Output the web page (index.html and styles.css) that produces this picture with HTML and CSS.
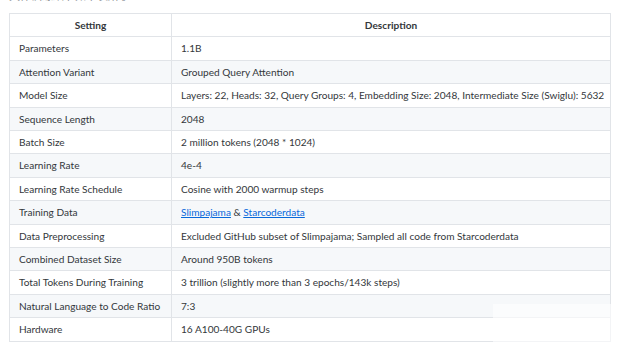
FILE: index.html
```html
<!DOCTYPE html>
<html lang="zh-CN">
<head>
    <meta charset="UTF-8">
    <title>TinyLlama Settings</title>
    <link rel="stylesheet" href="styles.css">
</head>
<body>
    <p class="intro">具体训练细节如下表所示：</p>

    <table class="settings">
        <colgroup>
            <col class="col-setting">
            <col>
        </colgroup>
        <thead>
            <tr>
                <th>Setting</th>
                <th>Description</th>
            </tr>
        </thead>
        <tbody>
            <tr><td>Parameters</td><td>1.1B</td></tr>
            <tr><td>Attention Variant</td><td>Grouped Query Attention</td></tr>
            <tr><td>Model Size</td><td>Layers: 22, Heads: 32, Query Groups: 4, Embedding Size: 2048, Intermediate Size (Swiglu): 5632</td></tr>
            <tr><td>Sequence Length</td><td>2048</td></tr>
            <tr><td>Batch Size</td><td>2 million tokens (2048 * 1024)</td></tr>
            <tr><td>Learning Rate</td><td>4e-4</td></tr>
            <tr><td>Learning Rate Schedule</td><td>Cosine with 2000 warmup steps</td></tr>
            <tr><td>Training Data</td><td><a href="#">Slimpajama</a> &amp; <a href="#">Starcoderdata</a></td></tr>
            <tr><td>Data Preprocessing</td><td>Excluded GitHub subset of Slimpajama; Sampled all code from Starcoderdata</td></tr>
            <tr><td>Combined Dataset Size</td><td>Around 950B tokens</td></tr>
            <tr><td>Total Tokens During Training</td><td>3 trillion (slightly more than 3 epochs/143k steps)</td></tr>
            <tr><td>Natural Language to Code Ratio</td><td>7:3</td></tr>
            <tr><td>Hardware</td><td>16 A100-40G GPUs</td></tr>
        </tbody>
    </table>

    <div class="watermark"></div>
</body>
</html>
```

FILE: styles.css
```css
:root {
    --text: #33373b;
    --muted: #8c8f94;
    --border: #e1e4e8;
    --stripe: #f6f8fa;
    --link: #0969da;
    --font-main: Lato, "Noto Sans CJK SC", sans-serif;
}

html, body {
    margin: 0;
    background: #fff;
    color: var(--text);
    font-family: var(--font-main);
    overflow: hidden;
}

body {
    padding-left: 9px;
    position: relative;
    height: 345px;
}

.intro {
    margin: -11px 0 0;
    height: 24px;
    font-size: 11px;
    line-height: 14px;
    color: var(--muted);
}

.settings {
    width: 602px;
    table-layout: fixed;
    border-collapse: collapse;
    font-size: 10.1px;
    line-height: 14.4px;
}

.col-setting {
    width: 162px;
}

.settings th,
.settings td {
    border: 1px solid var(--border);
    padding: 4px 9px;
    text-align: left;
    white-space: nowrap;
    overflow: hidden;
}

.settings th {
    font-weight: 700;
    text-align: center;
}

.settings tbody tr:nth-child(even) {
    background: var(--stripe);
}

.settings a {
    color: var(--link);
    text-decoration: underline;
}

/* faint watermark patch at the bottom right */
.watermark {
    position: absolute;
    left: 493px;
    top: 304px;
    width: 147px;
    height: 40px;
    background: rgba(255, 255, 255, 0.6);
}
```
